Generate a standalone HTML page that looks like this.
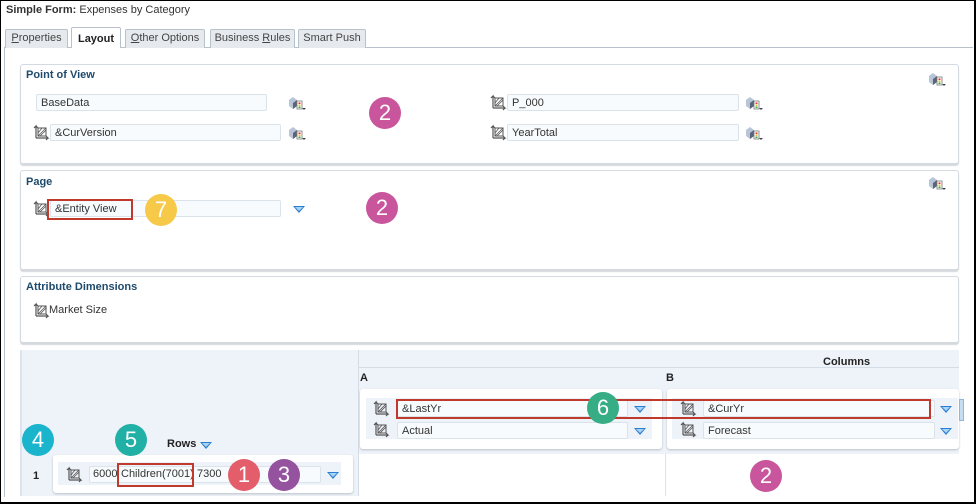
<!DOCTYPE html>
<html><head><style>
*{margin:0;padding:0;box-sizing:border-box}
body{width:976px;height:504px;background:#fff;font-family:"Liberation Sans",sans-serif;font-size:11px;color:#333;position:relative;overflow:hidden}
.a{position:absolute}
.frame{left:0;top:0;width:976px;height:504px;border:1px solid #000;border-bottom:2px solid #000;border-right:2px solid #000}
.tab{position:absolute;top:29px;height:19px;border:1px solid #b8c2cc;border-bottom:none;background:#e6eaee;color:#444;font-size:11px;line-height:17px;text-align:center;border-radius:2px 2px 0 0}
.panel{position:absolute;left:20px;width:939px;border:1px solid #d3dae2;border-radius:3px;background:#fff;box-shadow:0 2px 1px #d6d9dc}
.h{position:absolute;font-weight:bold;color:#1e4a6b;font-size:11px}
.in{position:absolute;height:17px;border:1px solid #dbe3ea;border-radius:2px;background:#f8fbfd;font-size:11px;line-height:16px;padding-left:4px;color:#333}
.badge{position:absolute;width:32px;height:32px;border-radius:50%;color:#fff;font-size:22px;line-height:32px;text-align:center;font-family:"Liberation Sans",sans-serif}
.red{position:absolute;border:2px solid #c0392b}
.tri{position:absolute;width:0;height:0;border-left:6px solid transparent;border-right:6px solid transparent;border-top:7px solid #2a7fd0}
.tri::after{content:"";position:absolute;left:-4px;top:-6px;border-left:4px solid transparent;border-right:4px solid transparent;border-top:4px solid #a9d3f5}
</style></head><body>
<svg width="0" height="0" style="position:absolute"><defs>
<g id="ms"><path d="M3 14V2l-2 2M3 2l2 2M3 14h12l-2-2M15 14l-2 2" fill="none" stroke="#555" stroke-width="1.2"/><rect x="5" y="4" width="8" height="8" fill="none" stroke="#555" stroke-width="1"/><path d="M5 12l8-8M7 12l6-6M5 9l4-5" stroke="#555" stroke-width="0.8"/></g>
<g id="cube"><path d="M1 4l4-3 4 3v6l-4 3-4-3z" fill="#b8c4d8"/><path d="M5 7v6l4-3V4z" fill="#5b6478"/><rect x="9" y="5" width="5" height="8" fill="#fff" stroke="#777" stroke-width="0.8"/><rect x="10.5" y="6.5" width="2" height="1.5" fill="#d33"/><rect x="10.5" y="8.5" width="2" height="1.5" fill="#eb3"/><rect x="10.5" y="10.5" width="2" height="1.5" fill="#3a3"/><path d="M14 12h4l-2 2z" fill="#445"/></g>
</defs></svg>
<div class="a" style="left:6px;top:4px;font-size:11px;color:#333"><b>Simple Form:</b> Expenses by Category</div>
<div class="a" style="left:4px;top:47px;width:969px;height:1px;background:#b8c2cc"></div>
<div class="a" style="left:4px;top:47px;width:1px;height:450px;background:#b8c2cc"></div>
<div class="tab" style="left:5px;width:63px"><u>P</u>roperties</div>
<div class="tab" style="left:71px;top:27px;width:50px;height:21px;background:#fff;color:#222;font-weight:bold;line-height:22px">Layout</div>
<div class="tab" style="left:125px;width:80px"><u>O</u>ther Options</div>
<div class="tab" style="left:210px;width:85px">Business <u>R</u>ules</div>
<div class="tab" style="left:298px;width:68px">Smart Push</div>

<div class="panel" style="top:64px;height:100px"></div>
<div class="h" style="left:26px;top:69px">Point of View</div>
<svg class="a" style="left:928px;top:72px" width="20" height="16"><use href="#cube"/></svg>
<div class="in" style="left:36px;top:94px;width:231px">BaseData</div>
<svg class="a" style="left:288px;top:96px" width="20" height="16"><use href="#cube"/></svg>
<svg class="a" style="left:33px;top:124px" width="18" height="17"><use href="#ms"/></svg>
<div class="in" style="left:50px;top:124px;width:231px">&amp;CurVersion</div>
<svg class="a" style="left:288px;top:126px" width="20" height="16"><use href="#cube"/></svg>
<svg class="a" style="left:490px;top:94px" width="18" height="17"><use href="#ms"/></svg>
<div class="in" style="left:507px;top:94px;width:232px">P_000</div>
<svg class="a" style="left:745px;top:96px" width="20" height="16"><use href="#cube"/></svg>
<svg class="a" style="left:490px;top:124px" width="18" height="17"><use href="#ms"/></svg>
<div class="in" style="left:507px;top:124px;width:232px">YearTotal</div>
<svg class="a" style="left:745px;top:126px" width="20" height="16"><use href="#cube"/></svg>
<div class="badge" style="left:369px;top:97px;background:#c9559d">2</div>

<div class="panel" style="top:170px;height:100px"></div>
<div class="h" style="left:26px;top:176px">Page</div>
<svg class="a" style="left:928px;top:176px" width="20" height="16"><use href="#cube"/></svg>
<svg class="a" style="left:33px;top:200px" width="18" height="17"><use href="#ms"/></svg>
<div class="in" style="left:50px;top:200px;width:231px">&amp;Entity View</div>
<div class="red" style="left:47px;top:199px;width:86px;height:21px"></div>
<div class="badge" style="left:145px;top:194px;background:#f7c948">7</div>
<div class="tri" style="left:293px;top:206px"></div>
<div class="badge" style="left:366px;top:192px;background:#c9559d">2</div>

<div class="panel" style="top:276px;height:67px"></div>
<div class="h" style="left:26px;top:281px">Attribute Dimensions</div>
<svg class="a" style="left:33px;top:302px" width="18" height="17"><use href="#ms"/></svg>
<div class="a" style="left:49px;top:304px">Market Size</div>

<div class="a" style="left:20px;top:350px;width:939px;height:146px;background:#eef2f9;border-left:2px solid #dde4ee"></div>
<div class="a" style="left:358px;top:350px;width:601px;height:18px;border-left:1px solid #d4dce6;border-bottom:1px solid #d4dce6"></div>
<div class="a" style="left:823px;top:356px;font-weight:bold;color:#222">Columns</div>
<div class="a" style="left:358px;top:368px;width:1px;height:128px;background:#d4dce6"></div>
<div class="a" style="left:360px;top:372px;font-weight:bold;color:#222">A</div>
<div class="a" style="left:666px;top:372px;font-weight:bold;color:#222">B</div>
<div class="a" style="left:359px;top:454px;width:600px;height:42px;background:#fff"></div>
<div class="a" style="left:665px;top:454px;width:1px;height:42px;background:#dde3ea"></div>

<div class="a" style="left:360px;top:389px;width:302px;height:60px;background:#fff;border-radius:3px;box-shadow:0 1px 2px #b8c0c8"></div>
<div class="a" style="left:366px;top:398px;width:286px;height:41px;background:#eef2f9"></div>
<svg class="a" style="left:373px;top:400px" width="18" height="17"><use href="#ms"/></svg>
<div class="in" style="left:397px;top:400px;width:231px">&amp;LastYr</div>
<div class="tri" style="left:634px;top:406px"></div>
<svg class="a" style="left:373px;top:421px" width="18" height="17"><use href="#ms"/></svg>
<div class="in" style="left:397px;top:422px;width:231px">Actual</div>
<div class="tri" style="left:634px;top:428px"></div>

<div class="a" style="left:667px;top:389px;width:292px;height:60px;background:#fff;border-radius:3px;box-shadow:0 1px 2px #b8c0c8"></div>
<div class="a" style="left:672px;top:398px;width:286px;height:41px;background:#eef2f9"></div>
<svg class="a" style="left:680px;top:400px" width="18" height="17"><use href="#ms"/></svg>
<div class="in" style="left:703px;top:400px;width:232px">&amp;CurYr</div>
<div class="tri" style="left:940px;top:406px"></div>
<svg class="a" style="left:680px;top:421px" width="18" height="17"><use href="#ms"/></svg>
<div class="in" style="left:703px;top:422px;width:232px">Forecast</div>
<div class="tri" style="left:940px;top:428px"></div>
<div class="a" style="left:959px;top:399px;width:5px;height:22px;background:#c5ddf2;border:1px solid #8db6dc"></div>
<div class="red" style="left:396px;top:399px;width:535px;height:20px"></div>
<div class="badge" style="left:587px;top:392px;background:#37ad85">6</div>

<div class="a" style="left:167px;top:438px;font-weight:bold;color:#222">Rows</div>
<div class="tri" style="left:200px;top:442px"></div>
<div class="a" style="left:33px;top:470px;font-weight:bold;color:#222">1</div>
<div class="a" style="left:53px;top:455px;width:300px;height:38px;background:#fff;border-radius:3px;box-shadow:0 1px 2px #b8c0c8"></div>
<div class="a" style="left:58px;top:462px;width:283px;height:23px;background:#eef2f9"></div>
<svg class="a" style="left:66px;top:466px" width="18" height="17"><use href="#ms"/></svg>
<div class="in" style="left:89px;top:466px;width:232px"></div>
<div class="a" style="left:93px;top:468px">6000</div>
<div class="a" style="left:121px;top:468px">Children(7001)</div>
<div class="a" style="left:197px;top:468px">7300</div>
<div class="tri" style="left:327px;top:472px"></div>
<div class="red" style="left:117px;top:463px;width:77px;height:24px"></div>
<div class="badge" style="left:228px;top:459px;background:#e35d6a">1</div>
<div class="badge" style="left:268px;top:459px;background:#94529f">3</div>
<div class="badge" style="left:22px;top:424px;background:#1ab4cc">4</div>
<div class="badge" style="left:115px;top:424px;background:#21b0a5">5</div>
<div class="badge" style="left:750px;top:460px;background:#c9559d">2</div>
<div class="a frame"></div>
</body></html>
